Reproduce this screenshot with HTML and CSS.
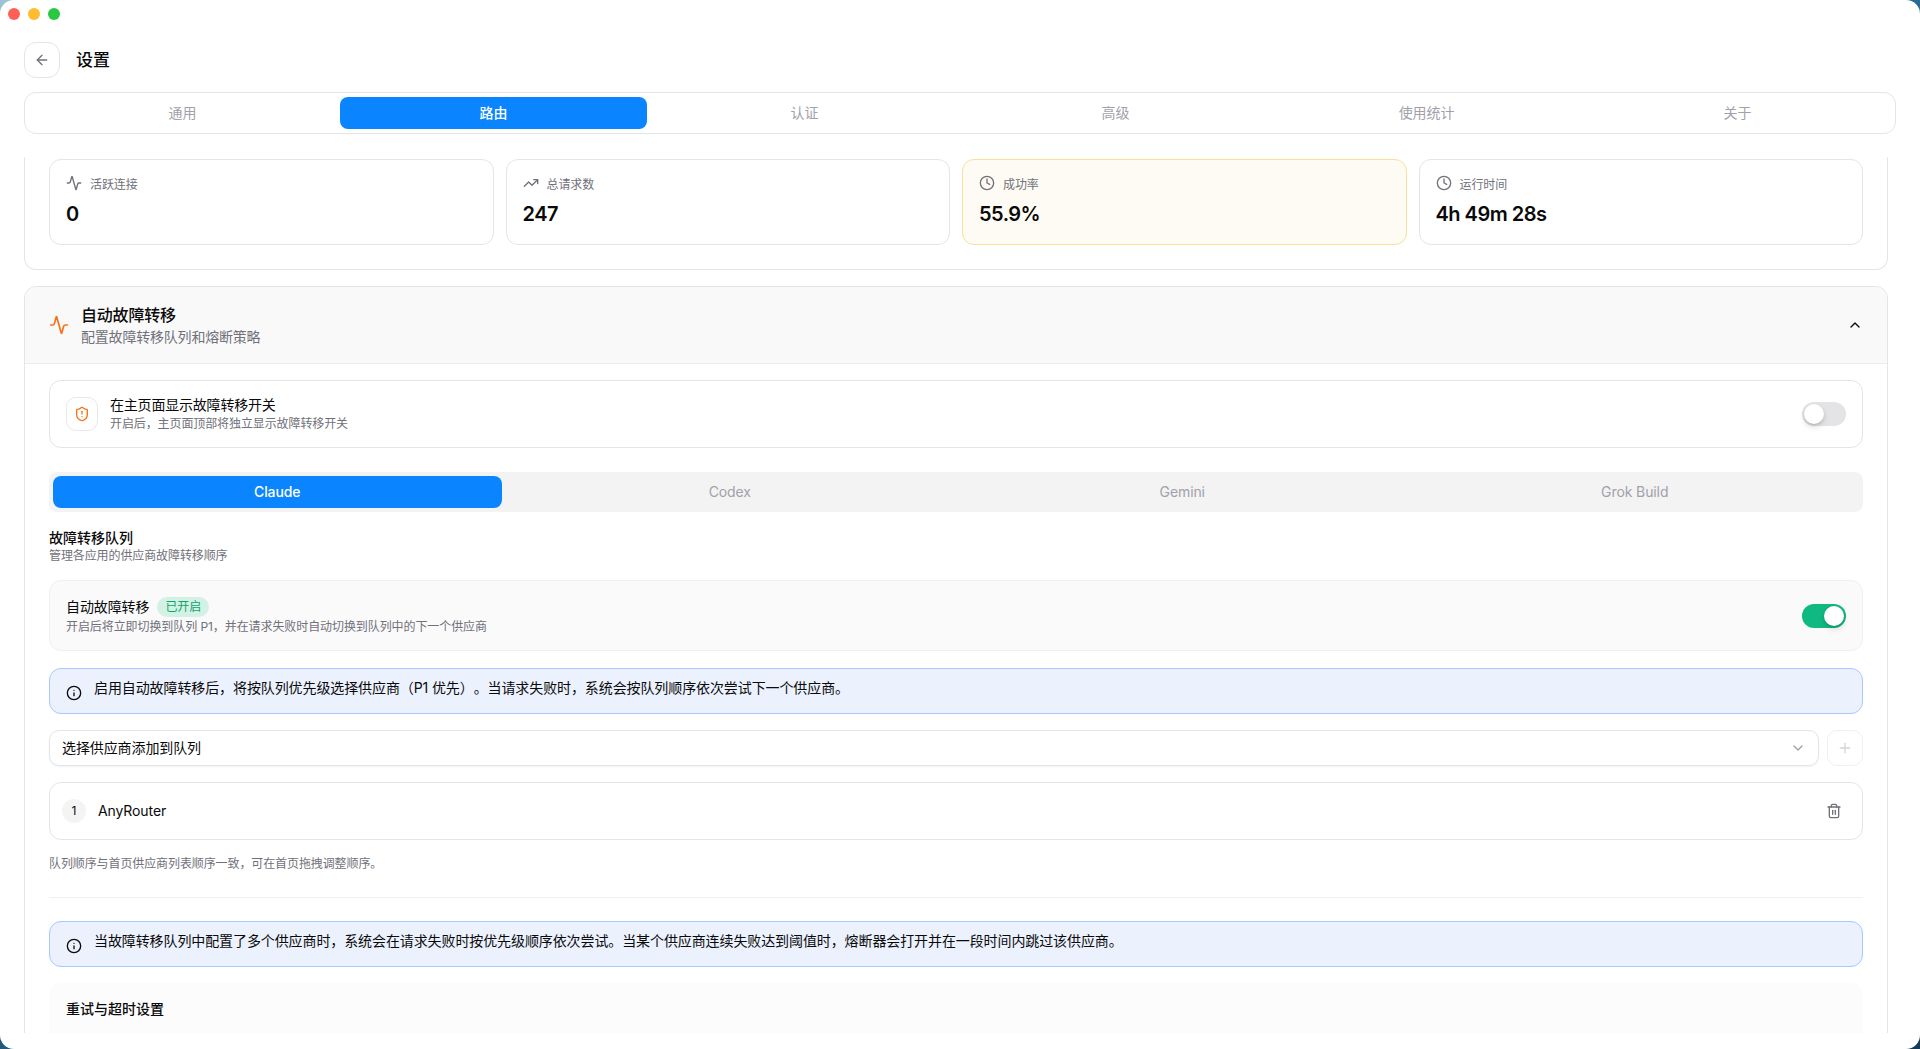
FILE: index.html
```html
<!DOCTYPE html>
<html lang="zh-CN">
<head>
    <meta charset="UTF-8">
    <meta name="viewport" content="width=device-width, initial-scale=1.0">
    <title>设置</title>
    <link rel="stylesheet" href="styles.css">
</head>
<body>
<div class="window">
    <div class="titlebar">
        <span class="dot red"></span>
        <span class="dot yellow"></span>
        <span class="dot green"></span>
    </div>

    <div class="page-header">
        <button class="back-btn">
            <svg class="icon" viewBox="0 0 24 24"><path d="m12 19-7-7 7-7"/><path d="M19 12H5"/></svg>
        </button>
        <h1>设置</h1>
    </div>

    <div class="tabs">
        <div class="tab">通用</div>
        <div class="tab active">路由</div>
        <div class="tab">认证</div>
        <div class="tab">高级</div>
        <div class="tab">使用统计</div>
        <div class="tab">关于</div>
    </div>

    <div class="scroll-area">
        <!-- scrolled part way, so the top of this card is cut off -->
        <div class="stats-card">
            <div class="stats">
                <div class="stat">
                    <div class="stat-label">
                        <svg class="icon" viewBox="0 0 24 24"><path d="M22 12h-2.48a2 2 0 0 0-1.93 1.46l-2.35 8.36a.25.25 0 0 1-.48 0L9.24 2.18a.25.25 0 0 0-.48 0l-2.35 8.36A2 2 0 0 1 4.49 12H2"/></svg>
                        活跃连接
                    </div>
                    <div class="stat-value">0</div>
                </div>
                <div class="stat">
                    <div class="stat-label">
                        <svg class="icon" viewBox="0 0 24 24"><polyline points="22 7 13.5 15.5 8.5 10.5 2 17"/><polyline points="16 7 22 7 22 13"/></svg>
                        总请求数
                    </div>
                    <div class="stat-value">247</div>
                </div>
                <div class="stat warn">
                    <div class="stat-label">
                        <svg class="icon" viewBox="0 0 24 24"><circle cx="12" cy="12" r="10"/><polyline points="12 6 12 12 16 14"/></svg>
                        成功率
                    </div>
                    <div class="stat-value">55.9%</div>
                </div>
                <div class="stat">
                    <div class="stat-label">
                        <svg class="icon" viewBox="0 0 24 24"><circle cx="12" cy="12" r="10"/><polyline points="12 6 12 12 16 14"/></svg>
                        运行时间
                    </div>
                    <div class="stat-value">4h 49m 28s</div>
                </div>
            </div>
        </div>

        <div class="section">
            <div class="section-head">
                <svg class="icon head-icon" viewBox="0 0 24 24"><path d="M22 12h-2.48a2 2 0 0 0-1.93 1.46l-2.35 8.36a.25.25 0 0 1-.48 0L9.24 2.18a.25.25 0 0 0-.48 0l-2.35 8.36A2 2 0 0 1 4.49 12H2"/></svg>
                <div class="head-text">
                    <div class="head-title">自动故障转移</div>
                    <div class="head-sub">配置故障转移队列和熔断策略</div>
                </div>
                <svg class="icon chevron-up" viewBox="0 0 24 24"><path d="m18 15-6-6-6 6"/></svg>
            </div>

            <div class="section-body">
                <div class="show-row">
                    <div class="shield-box">
                        <svg class="icon" viewBox="0 0 24 24"><path d="M20 13c0 5-3.5 7.5-7.66 8.95a1 1 0 0 1-.67-.01C7.5 20.5 4 18 4 13V6a1 1 0 0 1 1-1c2 0 4.5-1.2 6.24-2.72a1.17 1.17 0 0 1 1.52 0C14.51 3.81 17 5 19 5a1 1 0 0 1 1 1z"/><path d="M12 8v4"/><path d="M12 16h.01"/></svg>
                    </div>
                    <div class="row-text">
                        <div class="row-title">在主页面显示故障转移开关</div>
                        <div class="row-sub">开启后，主页面顶部将独立显示故障转移开关</div>
                    </div>
                    <span class="switch"></span>
                </div>

                <div class="app-tabs">
                    <div class="app-tab active">Claude</div>
                    <div class="app-tab">Codex</div>
                    <div class="app-tab">Gemini</div>
                    <div class="app-tab">Grok Build</div>
                </div>

                <div class="queue-head">
                    <div class="queue-title">故障转移队列</div>
                    <div class="row-sub">管理各应用的供应商故障转移顺序</div>
                </div>

                <div class="auto-row">
                    <div class="row-text">
                        <div class="auto-title">
                            自动故障转移
                            <span class="badge">已开启</span>
                        </div>
                        <div class="row-sub">开启后将立即切换到队列 P1，并在请求失败时自动切换到队列中的下一个供应商</div>
                    </div>
                    <span class="switch on"></span>
                </div>

                <div class="alert">
                    <svg class="icon" viewBox="0 0 24 24"><circle cx="12" cy="12" r="10"/><path d="M12 16v-4"/><path d="M12 8h.01"/></svg>
                    <div>启用自动故障转移后，将按队列优先级选择供应商（P1 优先）。当请求失败时，系统会按队列顺序依次尝试下一个供应商。</div>
                </div>

                <div class="picker">
                    <div class="select">
                        <span>选择供应商添加到队列</span>
                        <svg class="icon" viewBox="0 0 24 24"><path d="m6 9 6 6 6-6"/></svg>
                    </div>
                    <button class="add-btn">
                        <svg class="icon" viewBox="0 0 24 24"><path d="M5 12h14"/><path d="M12 5v14"/></svg>
                    </button>
                </div>

                <div class="queue-item">
                    <span class="num">1</span>
                    <span class="provider">AnyRouter</span>
                    <svg class="icon trash" viewBox="0 0 24 24"><path d="M3 6h18"/><path d="M19 6v14c0 1-1 2-2 2H7c-1 0-2-1-2-2V6"/><path d="M8 6V4c0-1 1-2 2-2h4c1 0 2 1 2 2v2"/><line x1="10" y1="11" x2="10" y2="17"/><line x1="14" y1="11" x2="14" y2="17"/></svg>
                </div>

                <div class="queue-note">队列顺序与首页供应商列表顺序一致，可在首页拖拽调整顺序。</div>

                <div class="divider"></div>

                <div class="alert">
                    <svg class="icon" viewBox="0 0 24 24"><circle cx="12" cy="12" r="10"/><path d="M12 16v-4"/><path d="M12 8h.01"/></svg>
                    <div>当故障转移队列中配置了多个供应商时，系统会在请求失败时按优先级顺序依次尝试。当某个供应商连续失败达到阈值时，熔断器会打开并在一段时间内跳过该供应商。</div>
                </div>

                <div class="retry-card">
                    <div class="queue-title">重试与超时设置</div>
                </div>
            </div>
        </div>
    </div>
</div>
</body>
</html>
```

FILE: styles.css
```css
* {
    box-sizing: border-box;
}

html, body {
    height: 100%;
    margin: 0;
    overflow: hidden;
}

body {
    font-family: Inter, "Noto Sans CJK SC", sans-serif;
    color: #0a0a0a;
    letter-spacing: -0.1px;
    text-spacing-trim: space-all;
    background: linear-gradient(160deg, #9cc2d6 0%, #2a6a92 40%, #133a56 100%);
}

.window {
    height: 1049px;
    padding: 0 24px;
    background-color: #fff;
    border-radius: 14px;
    overflow: hidden;
}

.icon {
    width: 16px;
    height: 16px;
    flex: none;
    fill: none;
    stroke: currentColor;
    stroke-width: 2;
    stroke-linecap: round;
    stroke-linejoin: round;
}

.titlebar {
    display: flex;
    align-items: center;
    gap: 8px;
    height: 28px;
    margin-left: -16px;
}

.dot {
    width: 12px;
    height: 12px;
    border-radius: 50%;
}

.dot.red {
    background-color: #ff5f57;
}

.dot.yellow {
    background-color: #febc2e;
}

.dot.green {
    background-color: #28c840;
}

.page-header {
    display: flex;
    align-items: center;
    gap: 16px;
    margin-top: 14px;
}

.page-header h1 {
    margin: 0 0 3px;
    font-size: 17px;
    font-weight: 500;
}

.back-btn {
    display: flex;
    align-items: center;
    justify-content: center;
    width: 36px;
    height: 36px;
    padding: 0;
    color: #71717a;
    background: #fff;
    border: 1px solid #e5e5e5;
    border-radius: 12px;
}

.tabs {
    display: grid;
    grid-template-columns: repeat(6, 1fr);
    gap: 4px;
    height: 42px;
    margin-top: 14px;
    padding: 4px;
    border: 1px solid #e5e5e5;
    border-radius: 12px;
}

.tab, .app-tab {
    display: flex;
    align-items: center;
    justify-content: center;
    height: 32px;
    padding-bottom: 2px;
    font-size: 14px;
    color: #a1a1aa;
    border-radius: 8px;
}

.tab.active, .app-tab.active {
    color: #fff;
    font-weight: 500;
    background-color: #0a84ff;
}

.scroll-area {
    height: 876px;
    margin-top: 23px;
    margin-right: 8px;
    overflow: hidden;
}

.stats-card {
    padding: 2px 24px 24px;
    border: 1px solid #e5e5e5;
    border-top: none;
    border-radius: 0 0 12px 12px;
}

.stats {
    display: grid;
    grid-template-columns: repeat(4, 1fr);
    gap: 12px;
}

.stat {
    height: 86px;
    padding: 15px 16px;
    border: 1px solid #e5e5e5;
    border-radius: 12px;
}

.stat.warn {
    background-color: #fefbf4;
    border-color: #fbdf9a;
}

.stat-label {
    display: flex;
    align-items: center;
    gap: 8px;
    height: 16px;
    font-size: 12px;
    color: #71717a;
}

.stat-value {
    margin-top: 9px;
    font-size: 20px;
    line-height: 28px;
    font-weight: 600;
    letter-spacing: -0.5px;
}

.section {
    margin-top: 16px;
    border: 1px solid #e5e5e5;
    border-radius: 12px 12px 0 0;
}

.section-head {
    display: flex;
    align-items: center;
    gap: 12px;
    padding: 16px 24px;
    background-color: #f9f9f9;
    border-bottom: 1px solid #ececec;
    border-radius: 12px 12px 0 0;
}

.head-icon {
    width: 20px;
    height: 20px;
    color: #f97316;
}

.head-text {
    flex: 1;
}

.head-title {
    font-size: 16px;
    line-height: 24px;
    font-weight: 500;
    letter-spacing: -0.2px;
}

.head-sub {
    font-size: 14px;
    line-height: 20px;
    letter-spacing: -0.2px;
    color: #71717a;
}

.section-body {
    padding: 16px 24px;
}

.show-row {
    display: flex;
    align-items: center;
    gap: 12px;
    height: 68px;
    padding: 0 16px;
    border: 1px solid #e5e5e5;
    border-radius: 12px;
}

.show-row .row-text {
    margin-bottom: 2px;
}

.shield-box {
    display: flex;
    align-items: center;
    justify-content: center;
    width: 32px;
    height: 34px;
    color: #f97316;
    border: 1px solid #e8e8e8;
    border-radius: 10px;
}

.row-text {
    flex: 1;
}

.row-title {
    font-size: 14px;
    line-height: 20px;
    letter-spacing: -0.2px;
}

.row-sub {
    margin-top: 1px;
    font-size: 12px;
    line-height: 16px;
    color: #71717a;
}

.switch {
    position: relative;
    width: 44px;
    height: 24px;
    flex: none;
    background-color: #e4e4e7;
    border-radius: 12px;
}

.switch:before {
    content: "";
    position: absolute;
    top: 2px;
    left: 2px;
    width: 20px;
    height: 20px;
    background-color: #fff;
    border-radius: 50%;
    box-shadow: 0 4px 6px rgba(0, 0, 0, 0.1), 0 1px 3px rgba(0, 0, 0, 0.15);
}

.switch.on {
    background-color: #10b981;
}

.switch.on:before {
    left: 22px;
}

.app-tabs {
    display: grid;
    grid-template-columns: repeat(4, 1fr);
    gap: 4px;
    height: 40px;
    margin-top: 24px;
    padding: 4px;
    background-color: #f3f3f4;
    border-radius: 8px;
}

.queue-head {
    margin-top: 16px;
}

.queue-title {
    font-size: 14px;
    line-height: 20px;
    font-weight: 500;
    letter-spacing: 0;
}

.queue-head .row-sub {
    margin-top: 0;
}

.auto-row {
    display: flex;
    align-items: center;
    height: 71px;
    margin-top: 16px;
    padding: 0 16px;
    background-color: #fafafa;
    border: 1px solid #f0f0f0;
    border-radius: 12px;
}

.auto-row .row-sub {
    margin-top: 2px;
    letter-spacing: -0.08px;
}

.auto-title {
    display: flex;
    align-items: center;
    gap: 8px;
    font-size: 14px;
    line-height: 20px;
}

.badge {
    padding: 0 8px;
    font-size: 12px;
    line-height: 20px;
    font-weight: 400;
    color: #10a36e;
    background-color: #d3f1e5;
    border-radius: 10px;
}

.alert {
    display: flex;
    align-items: flex-start;
    gap: 12px;
    height: 46px;
    margin-top: 17px;
    padding: 9px 16px;
    font-size: 14px;
    line-height: 20px;
    background-color: #ebf1fd;
    border: 1px solid #a9c8fd;
    border-radius: 12px;
}

.alert .icon {
    margin-top: 7px;
}

.picker {
    display: flex;
    gap: 8px;
    margin-top: 16px;
}

.select {
    display: flex;
    align-items: center;
    justify-content: space-between;
    flex: 1;
    height: 36px;
    padding: 0 12px;
    font-size: 14px;
    background: #fff;
    border: 1px solid #e5e5e5;
    border-radius: 10px;
    box-shadow: 0 1px 2px rgba(0, 0, 0, 0.05);
}

.select span {
    margin-bottom: 2px;
}

.select .icon {
    color: #a1a1a1;
}

.add-btn {
    display: flex;
    align-items: center;
    justify-content: center;
    width: 36px;
    height: 36px;
    padding: 0;
    color: #d4d4d8;
    background: #fff;
    border: 1px solid #f0f0f0;
    border-radius: 10px;
}

.queue-item {
    display: flex;
    align-items: center;
    gap: 12px;
    height: 58px;
    margin-top: 16px;
    padding: 0 20px 0 12px;
    border: 1px solid #e5e5e5;
    border-radius: 12px;
}

.num {
    width: 24px;
    height: 24px;
    font-size: 12px;
    line-height: 23px;
    text-align: center;
    background-color: #f4f4f5;
    border-radius: 50%;
}

.provider {
    flex: 1;
    margin-bottom: 2px;
    font-size: 14px;
}

.trash {
    color: #71717a;
}

.queue-note {
    margin-top: 16px;
    font-size: 12px;
    line-height: 16px;
    color: #71717a;
}

.divider {
    height: 1px;
    margin-top: 25px;
    background-color: #f0f0f0;
}

.divider + .alert {
    margin-top: 23px;
}

.retry-card {
    margin-top: 16px;
    height: 120px;
    padding: 16px 17px;
    background-color: #fcfcfc;
    border-radius: 12px;
}
```
